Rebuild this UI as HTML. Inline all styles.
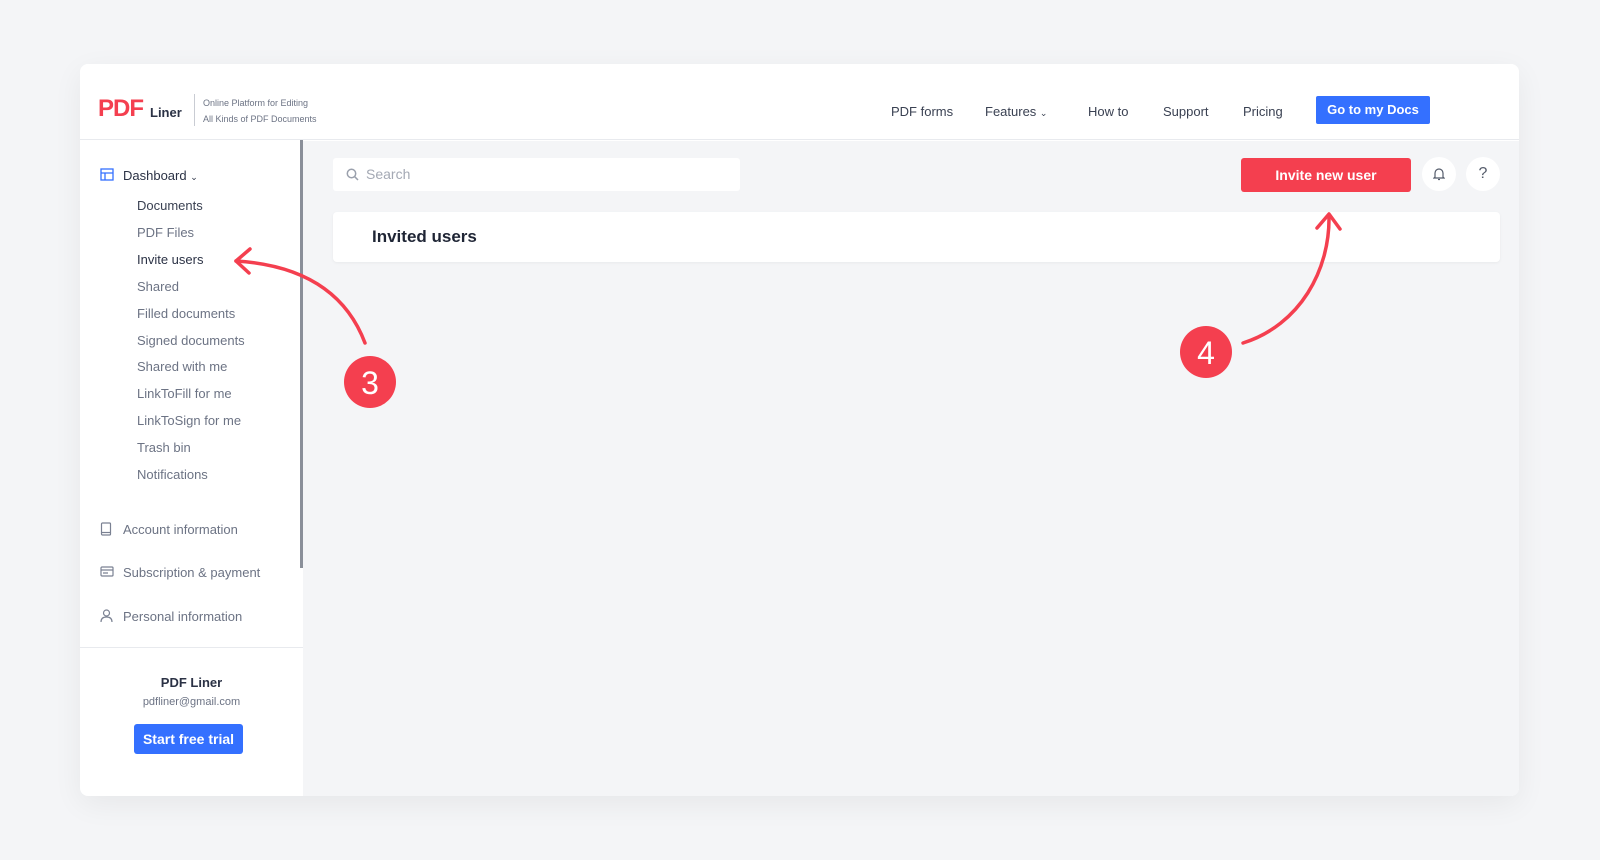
<!DOCTYPE html>
<html><head><meta charset="utf-8"><style>
*{margin:0;padding:0;box-sizing:border-box}
body{width:1600px;height:860px;background:#f4f5f7;font-family:"Liberation Sans",sans-serif;position:relative;overflow:hidden;color:#2b3245}
.card{position:absolute;left:80px;top:64px;width:1439px;height:732px;background:#fff;border-radius:8px;box-shadow:0 8px 30px rgba(0,0,0,.06);overflow:hidden}
.hdr{position:absolute;left:0;top:0;right:0;height:76px;border-bottom:1px solid #e8eaee;background:#fff}
.abs{position:absolute}
.nav{position:absolute;top:40px;font-size:13px;color:#3a4152}
.main{position:absolute;left:223px;top:77px;right:0;bottom:0;background:#f4f5f7}
.side a{position:absolute;left:57px;font-size:13px;color:#6c7384;text-decoration:none}
.side .ic{position:absolute;left:20px}
</style></head><body>
<div class="card">
 <div class="hdr">
  <div class="abs" style="left:18px;top:31px;font-size:24px;font-weight:bold;color:#f43f4f;letter-spacing:-1px">PDF</div>
  <div class="abs" style="left:70px;top:41px;font-size:13px;font-weight:bold;color:#2b3245">Liner</div>
  <div class="abs" style="left:114px;top:30px;width:1px;height:32px;background:#c9ccd3"></div>
  <div class="abs" style="left:123px;top:31px;font-size:9px;color:#6c7384;line-height:16px">Online Platform for Editing<br>All Kinds of PDF Documents</div>
  <div class="nav" style="left:811px">PDF forms</div>
  <div class="nav" style="left:905px">Features <span style="font-size:9px">&#8964;</span></div>
  <div class="nav" style="left:1008px">How to</div>
  <div class="nav" style="left:1083px">Support</div>
  <div class="nav" style="left:1163px">Pricing</div>
  <div class="abs" style="left:1236px;top:32px;width:114px;height:28px;background:#3470ff;border-radius:2px;color:#fff;font-size:13px;font-weight:bold;text-align:center;line-height:28px">Go to my Docs</div>
 </div>
 <div class="side">
  <svg class="ic" style="top:104px" width="14" height="13" viewBox="0 0 14 13"><rect x="1" y="1" width="12" height="11" fill="none" stroke="#3470ff" stroke-width="1.3"/><path d="M1 5H13M5 5V12" stroke="#3470ff" stroke-width="1.3"/></svg>
  <div class="abs" style="left:43px;top:104px;font-size:13px;color:#2b3245">Dashboard <span style="font-size:9px">&#8964;</span></div>
  <a style="top:134px;left:57px;color:#3a4152">Documents</a>
  <a style="top:161px">PDF Files</a>
  <a style="top:188px;color:#2b3245">Invite users</a>
  <a style="top:215px">Shared</a>
  <a style="top:242px">Filled documents</a>
  <a style="top:269px">Signed documents</a>
  <a style="top:295px">Shared with me</a>
  <a style="top:322px">LinkToFill for me</a>
  <a style="top:349px">LinkToSign for me</a>
  <a style="top:376px">Trash bin</a>
  <a style="top:403px">Notifications</a>
  <svg class="ic" style="top:458px" width="12" height="14" viewBox="0 0 12 14"><rect x="1.5" y="1" width="9" height="12" rx="1" fill="none" stroke="#7a8192" stroke-width="1.2"/><path d="M2 10.5H10" stroke="#7a8192" stroke-width="1.2"/></svg>
  <a style="top:458px;left:43px">Account information</a>
  <svg class="ic" style="top:502px" width="14" height="11" viewBox="0 0 14 11"><rect x="1" y="1" width="12" height="9" rx="1" fill="none" stroke="#7a8192" stroke-width="1.2"/><path d="M1 4H13M3 7H8" stroke="#7a8192" stroke-width="1.2"/></svg>
  <a style="top:501px;left:43px">Subscription &amp; payment</a>
  <svg class="ic" style="top:545px" width="13" height="13" viewBox="0 0 13 13"><circle cx="6.5" cy="4" r="3" fill="none" stroke="#7a8192" stroke-width="1.2"/><path d="M1 13C1 9 3.5 8 6.5 8S12 9 12 13" fill="none" stroke="#7a8192" stroke-width="1.2"/></svg>
  <a style="top:545px;left:43px">Personal information</a>
  <div class="abs" style="left:0;top:583px;width:223px;height:1px;background:#e8eaee"></div>
  <div class="abs" style="left:0;width:223px;top:611px;text-align:center;font-size:13px;font-weight:bold;color:#2b3245">PDF Liner</div>
  <div class="abs" style="left:0;width:223px;top:632px;text-align:center;font-size:11px;color:#6c7384">pdfliner@gmail.com</div>
  <div class="abs" style="left:54px;top:660px;width:109px;height:30px;background:#3470ff;border-radius:3px;color:#fff;font-size:14px;font-weight:bold;text-align:center;line-height:30px">Start free trial</div>
 </div>
 <div class="abs" style="left:220px;top:76px;width:3px;height:428px;background:#8a8f99"></div>
 <div class="main">
  <div class="abs" style="left:30px;top:17px;width:407px;height:33px;background:#fff;border-radius:3px">
   <svg class="abs" style="left:13px;top:10px" width="13" height="13" viewBox="0 0 13 13"><circle cx="5.5" cy="5.5" r="4.2" fill="none" stroke="#9aa0ac" stroke-width="1.5"/><path d="M8.7 8.7L12 12" stroke="#9aa0ac" stroke-width="1.5"/></svg>
   <div class="abs" style="left:33px;top:8px;font-size:14px;color:#a4a9b4">Search</div>
  </div>
  <div class="abs" style="left:938px;top:17px;width:170px;height:34px;background:#f43f4f;border-radius:3px;color:#fff;font-size:14px;font-weight:bold;text-align:center;line-height:34px">Invite new user</div>
  <div class="abs" style="left:1119px;top:16px;width:34px;height:34px;border-radius:50%;background:#fff"><svg class="abs" style="left:11px;top:10px" width="12" height="14" viewBox="0 0 12 14"><path d="M2 10V6a4 4 0 0 1 8 0v4l1 1H1z" fill="none" stroke="#555c6b" stroke-width="1.2"/><path d="M5 12.5h2" stroke="#555c6b" stroke-width="1.2"/></svg></div>
  <div class="abs" style="left:1163px;top:16px;width:34px;height:34px;border-radius:50%;background:#fff;text-align:center;line-height:34px;font-size:16px;color:#555c6b">?</div>
  <div class="abs" style="left:30px;top:71px;width:1167px;height:50px;background:#fff;border-radius:4px;box-shadow:0 1px 3px rgba(0,0,0,.05)">
   <div class="abs" style="left:39px;top:15px;font-size:17px;font-weight:bold;color:#1f2535">Invited users</div>
  </div>
 </div>
</div>
<svg class="abs" style="left:0;top:0" width="1600" height="860">
 <g fill="none" stroke="#f43f4f" stroke-width="3.5" stroke-linecap="round" stroke-linejoin="round">
  <path d="M365 343C345 290 300 265 236 261"/>
  <path d="M250 249L236 261L249 273"/>
  <path d="M1243 343C1300 325 1330 270 1329 216"/>
  <path d="M1317 228L1329 214L1340 229"/>
 </g>
 <circle cx="370" cy="382" r="26" fill="#f43f4f"/>
 <text x="370" y="394" text-anchor="middle" font-family="Liberation Sans" font-size="32" fill="#fff">3</text>
 <circle cx="1206" cy="352" r="26" fill="#f43f4f"/>
 <text x="1206" y="364" text-anchor="middle" font-family="Liberation Sans" font-size="32" fill="#fff">4</text>
</svg>
</body></html>
